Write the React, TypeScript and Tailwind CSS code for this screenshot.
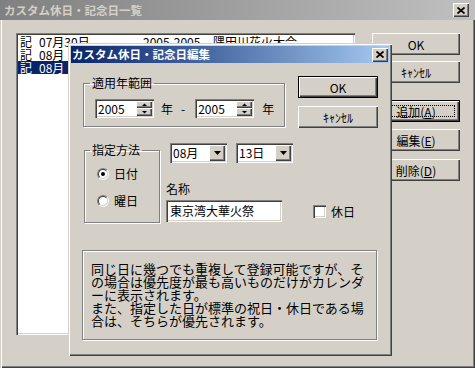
import React from 'react';

const raised = 'bg-[#d4d0c8] shadow-[inset_1px_1px_#ffffff,inset_-1px_-1px_#404040,inset_-2px_-2px_#808080]';
const sunken = 'bg-white shadow-[inset_1px_1px_#808080,inset_2px_2px_#404040,inset_-1px_-1px_#ffffff,inset_-2px_-2px_#d4d0c8]';
const windowEdge = 'shadow-[inset_1px_1px_#d4d0c8,inset_2px_2px_#ffffff,inset_-1px_-1px_#404040,inset_-2px_-2px_#808080]';
const etched = 'border border-[#808080] shadow-[1px_1px_#ffffff,inset_1px_1px_#ffffff]';

type BtnProps = { children: React.ReactNode; isDefault?: boolean; focused?: boolean; className?: string };

function Button({ children, isDefault = false, focused = false, className = '' }: BtnProps) {
  const face = (
    <div className={`relative flex h-full w-full items-center justify-center ${raised}`}>
      {focused && <div className="absolute inset-[4px] border border-dotted border-black" />}
      <span className="relative">{children}</span>
    </div>
  );
  return <div className={`${isDefault ? 'border border-black' : ''} ${className}`}>{face}</div>;
}

function CloseBox() {
  return (
    <div className={`flex h-[14px] w-[16px] items-center justify-center ${raised}`}>
      <svg width="8" height="7" viewBox="0 0 8 7">
        <path d="M0.5 0.5 L7.5 6.5 M7.5 0.5 L0.5 6.5" stroke="#000" strokeWidth="1.7" />
      </svg>
    </div>
  );
}

function SpinEdit({ value }: { value: string }) {
  return (
    <div className={`flex h-[19px] w-[59px] p-[2px] ${sunken}`}>
      <div className="flex-1 pl-[1px] leading-[15px]">{value}</div>
      <div className="flex w-[16px] flex-col">
        <div className={`flex h-[7px] items-center justify-center ${raised}`}>
          <svg width="5" height="3" viewBox="0 0 5 3">
            <path d="M0 3 H5 L2.5 0.5 Z" fill="#000" />
          </svg>
        </div>
        <div className={`flex h-[8px] items-center justify-center ${raised}`}>
          <svg width="5" height="3" viewBox="0 0 5 3">
            <path d="M0 0 H5 L2.5 2.5 Z" fill="#000" />
          </svg>
        </div>
      </div>
    </div>
  );
}

function Combo({ value }: { value: string }) {
  return (
    <div className={`flex h-[20px] w-[57px] p-[2px] ${sunken}`}>
      <div className="flex-1 pl-[1px] leading-[16px]">{value}</div>
      <div className={`flex w-[16px] items-center justify-center ${raised}`}>
        <svg width="7" height="4" viewBox="0 0 7 4">
          <path d="M0 0 H7 L3.5 4 Z" fill="#000" />
        </svg>
      </div>
    </div>
  );
}

function Radio({ label, checked }: { label: string; checked?: boolean }) {
  return (
    <div className="flex h-[12px] items-center">
      <div className="h-[12px] w-[12px] rounded-full border border-t-[#808080] border-l-[#808080] border-r-white border-b-white">
        <div className="flex h-full w-full items-center justify-center rounded-full border border-t-[#404040] border-l-[#404040] border-r-[#d4d0c8] border-b-[#d4d0c8] bg-white">
          {checked && <div className="h-[4px] w-[4px] rounded-full bg-black" />}
        </div>
      </div>
      <span className="ml-[5px] leading-[12px]">{label}</span>
    </div>
  );
}

// rows 2 and 3 are mostly hidden behind the edit dialog
const rows = [
  { mark: '記', date: '07月30日', range: '2005-2005', name: '隅田川花火大会' },
  { mark: '記', date: '08月', range: '', name: '' },
  { mark: '記', date: '08月', range: '', name: '' },
];

export default function App() {
  return (
    <div className="relative h-[368px] w-[475px] overflow-hidden bg-[#d4d0c8] font-['Noto_Sans_CJK_JP','Noto_Sans_CJK_SC',sans-serif] text-[12px] leading-[13px] text-black">
      {/* 一覧ウィンドウ */}
      <div className={`flex h-full flex-col ${windowEdge}`}>
        <div className="flex h-[20px] items-center bg-gradient-to-r from-[#808080] to-[#c0c0c0] pl-[4px] pr-[6px]">
          <span className="text-[11.5px] font-bold text-[#d4d0c8]">カスタム休日・記念日一覧</span>
          <div className="ml-auto">
            <CloseBox />
          </div>
        </div>
        <div className="flex pl-[16px] pt-[13px]">
          <div className={`h-[302px] w-[339px] p-[2px] ${sunken}`}>
            {rows.map((r, i) => (
              <div
                key={i}
                className={`flex h-[13px] whitespace-nowrap pl-[2px] ${i === 2 ? 'bg-[#0a246a] text-white' : ''}`}
              >
                <span className="w-[19px]">{r.mark}</span>
                <span className="w-[104px]">{r.date}</span>
                <span className="w-[70px]">{r.range}</span>
                <span>{r.name}</span>
              </div>
            ))}
          </div>
          <div className="ml-[17px] flex w-[88px] flex-col">
            <Button className="h-[22px]">OK</Button>
            <Button className="mt-[6px] h-[22px]">ｷｬﾝｾﾙ</Button>
            <Button isDefault focused className="mt-[17px] h-[22px]">
              追加(<u>A</u>)
            </Button>
            <Button className="mt-[7px] h-[22px]">
              編集(<u>E</u>)
            </Button>
            <Button className="mt-[8px] h-[22px]">
              削除(<u>D</u>)
            </Button>
          </div>
        </div>
      </div>

      {/* 編集ダイアログ */}
      <div className={`absolute left-[68px] top-[43px] flex h-[313px] w-[324px] flex-col bg-[#d4d0c8] p-[3px] ${windowEdge}`}>
        <div className="flex h-[17px] items-center bg-gradient-to-r from-[#0a246a] to-[#a6caf0] pl-[1px] pr-[1px]">
          <span className="text-[11.5px] font-bold text-white">カスタム休日・記念日編集</span>
          <div className="ml-auto">
            <CloseBox />
          </div>
        </div>

        <div className="flex flex-col pl-[11px] pt-[13px]">
          <div className="flex items-start">
            <fieldset className={`ml-[1px] mt-[1px] h-[50px] w-[202px] ${etched}`}>
              <legend className="ml-[6px] px-[2px] leading-[12px]">適用年範囲</legend>
              <div className="flex items-center pl-[11px] pt-[10px]">
                <SpinEdit value="2005" />
                <span className="ml-[7px]">年</span>
                <span className="ml-[8px]">-</span>
                <span className="ml-[10px]" />
                <SpinEdit value="2005" />
                <span className="ml-[8px]">年</span>
              </div>
            </fieldset>
            <div className="ml-[13px] flex w-[80px] flex-col gap-[8px]">
              <Button isDefault className="h-[22px]">OK</Button>
              <Button className="h-[22px]">ｷｬﾝｾﾙ</Button>
            </div>
          </div>

          <div className="mt-[15px] flex items-start">
            <fieldset className={`ml-[2px] mt-[1px] h-[79px] w-[76px] ${etched}`}>
              <legend className="ml-[5px] px-[2px] leading-[12px]">指定方法</legend>
              <div className="flex flex-col gap-[15px] pl-[12px] pt-[12px]">
                <Radio label="日付" checked />
                <Radio label="曜日" />
              </div>
            </fieldset>
            <div className="ml-[6px] flex flex-col">
              <div className="ml-[4px] flex gap-[9px]">
                <Combo value="08月" />
                <Combo value="13日" />
              </div>
              <span className="mt-[19px]">名称</span>
              <div className="mt-[5px] flex items-center">
                <div className={`h-[22px] w-[116px] px-[4px] leading-[22px] ${sunken}`}>東京湾大華火祭</div>
                <div className={`ml-[31px] h-[13px] w-[13px] ${sunken}`} />
                <span className="ml-[5px]">休日</span>
              </div>
            </div>
          </div>

          <div className={`mt-[27px] h-[90px] w-[295px] pl-[8px] pt-[11px] text-[13px] leading-[13px] ${etched}`}>
            同じ日に幾つでも重複して登録可能ですが、そ
            <br />
            の場合は優先度が最も高いものだけがカレンダ
            <br />
            ーに表示されます。
            <br />
            また、指定した日が標準の祝日・休日である場
            <br />
            合は、そちらが優先されます。
          </div>
        </div>
      </div>
    </div>
  );
}
